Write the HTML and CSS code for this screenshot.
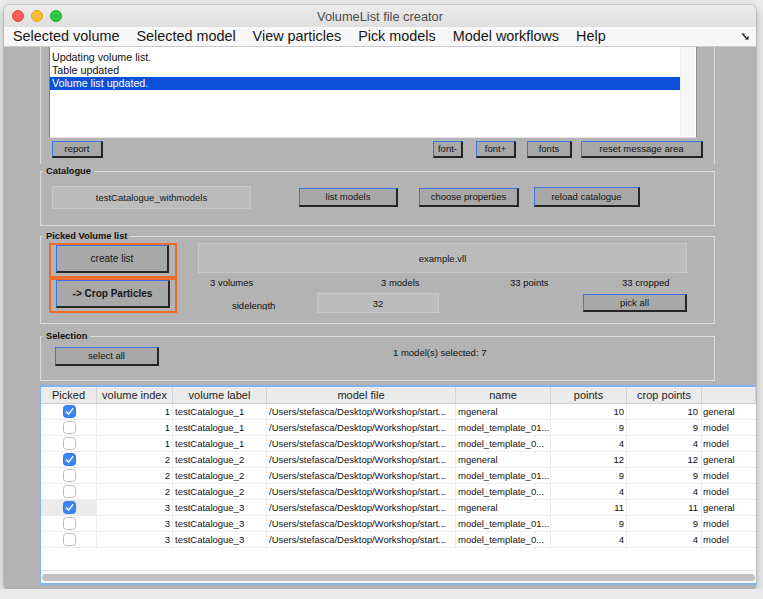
FILE: index.html
```html
<!DOCTYPE html>
<html>
<head>
<meta charset="utf-8">
<title>VolumeList file creator</title>
<link rel="stylesheet" href="styles.css">
</head>
<body>
<div class="window">
  <div class="titlebar">
    <div class="lights">
      <span class="light red"></span><span class="light yellow"></span><span class="light green"></span>
    </div>
    <div class="title">VolumeList file creator</div>
    <div></div>
  </div>
  <div class="menubar">
    <span class="menu">Selected volume</span>
    <span class="menu">Selected model</span>
    <span class="menu">View particles</span>
    <span class="menu">Pick models</span>
    <span class="menu">Model workflows</span>
    <span class="menu">Help</span>
    <svg class="resize" width="8" height="7" viewBox="0 0 8 7"><path d="M0.5 1 H3.5" stroke="#111" stroke-width="1.1"/><path d="M2 1.5 L5.2 4.7" stroke="#111" stroke-width="1.3"/><path d="M7.5 6.5 H3.8 L7.5 2.8 Z" fill="#111"/></svg>
  </div>
  <div class="content">
    <div class="msgframe">
      <div class="listbox">
        <div class="lines">
          <div class="line">Updating volume list.</div>
          <div class="line">Table updated</div>
          <div class="line sel">Volume list updated.</div>
        </div>
        <div class="vscroll"></div>
      </div>
      <div class="msgbuttons">
        <button class="btn b-report">report</button>
        <button class="btn b-fontminus">font-</button>
        <button class="btn b-fontplus">font+</button>
        <button class="btn b-fonts">fonts</button>
        <button class="btn b-reset">reset message area</button>
      </div>
    </div>

    <div class="group g-catalogue">
      <span class="group-title">Catalogue</span>
      <div class="cat-row">
        <div class="entry e-catalogue">testCatalogue_withmodels</div>
        <button class="btn b-list">list models</button>
        <button class="btn b-choose">choose properties</button>
        <button class="btn b-reload">reload catalogue</button>
      </div>
    </div>

    <div class="group g-picked">
      <span class="group-title">Picked Volume list</span>
      <div class="picked-body">
        <div class="picked-left">
          <div class="hl"><button class="btn b-create">create list</button></div>
          <div class="hl"><button class="btn b-crop">-&gt; Crop Particles</button></div>
        </div>
        <div class="picked-right">
          <div class="entry e-file">example.vll</div>
          <div class="stats">
            <span>3 volumes</span>
            <span>3 models</span>
            <span>33 points</span>
            <span>33 cropped</span>
          </div>
          <div class="side-row">
            <span class="side-label">sidelength</span>
            <div class="entry e-side">32</div>
            <button class="btn b-pick">pick all</button>
          </div>
        </div>
      </div>
    </div>

    <div class="group g-selection">
      <span class="group-title">Selection</span>
      <div class="sel-row">
        <button class="btn b-selall">select all</button>
        <span class="sel-text">1 model(s) selected: 7</span>
      </div>
    </div>

    <div class="table">
      <div class="trow thead">
        <div class="th">Picked</div>
        <div class="th">volume index</div>
        <div class="th">volume label</div>
        <div class="th">model file</div>
        <div class="th">name</div>
        <div class="th">points</div>
        <div class="th">crop points</div>
        <div class="th"></div>
      </div>

      <div class="trow">
        <div class="td c-check"><svg class="cb" width="13" height="13" viewBox="0 0 13 13"><rect x="0.5" y="0.5" width="12" height="12" rx="3" fill="#3a86f6" stroke="#2f78e8"/><path d="M3.4 6.9 L5.5 9.1 L9.7 3.9" fill="none" stroke="#fff" stroke-width="1.5" stroke-linecap="round" stroke-linejoin="round"/></svg></div>
        <div class="td num">1</div><div class="td">testCatalogue_1</div><div class="td">/Users/stefasca/Desktop/Workshop/start...</div><div class="td">mgeneral</div><div class="td num">10</div><div class="td num n2">10</div><div class="td last">general</div>
      </div>
      <div class="trow">
        <div class="td c-check"><svg class="cb" width="13" height="13" viewBox="0 0 13 13"><rect x="0.5" y="0.5" width="12" height="12" rx="3" fill="#fff" stroke="#bcbcbc"/></svg></div>
        <div class="td num">1</div><div class="td">testCatalogue_1</div><div class="td">/Users/stefasca/Desktop/Workshop/start...</div><div class="td">model_template_01...</div><div class="td num">9</div><div class="td num n2">9</div><div class="td last">model</div>
      </div>
      <div class="trow">
        <div class="td c-check"><svg class="cb" width="13" height="13" viewBox="0 0 13 13"><rect x="0.5" y="0.5" width="12" height="12" rx="3" fill="#fff" stroke="#bcbcbc"/></svg></div>
        <div class="td num">1</div><div class="td">testCatalogue_1</div><div class="td">/Users/stefasca/Desktop/Workshop/start...</div><div class="td">model_template_0...</div><div class="td num">4</div><div class="td num n2">4</div><div class="td last">model</div>
      </div>
      <div class="trow">
        <div class="td c-check"><svg class="cb" width="13" height="13" viewBox="0 0 13 13"><rect x="0.5" y="0.5" width="12" height="12" rx="3" fill="#3a86f6" stroke="#2f78e8"/><path d="M3.4 6.9 L5.5 9.1 L9.7 3.9" fill="none" stroke="#fff" stroke-width="1.5" stroke-linecap="round" stroke-linejoin="round"/></svg></div>
        <div class="td num">2</div><div class="td">testCatalogue_2</div><div class="td">/Users/stefasca/Desktop/Workshop/start...</div><div class="td">mgeneral</div><div class="td num">12</div><div class="td num n2">12</div><div class="td last">general</div>
      </div>
      <div class="trow">
        <div class="td c-check"><svg class="cb" width="13" height="13" viewBox="0 0 13 13"><rect x="0.5" y="0.5" width="12" height="12" rx="3" fill="#fff" stroke="#bcbcbc"/></svg></div>
        <div class="td num">2</div><div class="td">testCatalogue_2</div><div class="td">/Users/stefasca/Desktop/Workshop/start...</div><div class="td">model_template_01...</div><div class="td num">9</div><div class="td num n2">9</div><div class="td last">model</div>
      </div>
      <div class="trow">
        <div class="td c-check"><svg class="cb" width="13" height="13" viewBox="0 0 13 13"><rect x="0.5" y="0.5" width="12" height="12" rx="3" fill="#fff" stroke="#bcbcbc"/></svg></div>
        <div class="td num">2</div><div class="td">testCatalogue_2</div><div class="td">/Users/stefasca/Desktop/Workshop/start...</div><div class="td">model_template_0...</div><div class="td num">4</div><div class="td num n2">4</div><div class="td last">model</div>
      </div>
      <div class="trow">
        <div class="td c-check hover"><svg class="cb" width="13" height="13" viewBox="0 0 13 13"><rect x="0.5" y="0.5" width="12" height="12" rx="3" fill="#3a86f6" stroke="#2f78e8"/><path d="M3.4 6.9 L5.5 9.1 L9.7 3.9" fill="none" stroke="#fff" stroke-width="1.5" stroke-linecap="round" stroke-linejoin="round"/></svg></div>
        <div class="td num">3</div><div class="td">testCatalogue_3</div><div class="td">/Users/stefasca/Desktop/Workshop/start...</div><div class="td">mgeneral</div><div class="td num">11</div><div class="td num n2">11</div><div class="td last">general</div>
      </div>
      <div class="trow">
        <div class="td c-check"><svg class="cb" width="13" height="13" viewBox="0 0 13 13"><rect x="0.5" y="0.5" width="12" height="12" rx="3" fill="#fff" stroke="#bcbcbc"/></svg></div>
        <div class="td num">3</div><div class="td">testCatalogue_3</div><div class="td">/Users/stefasca/Desktop/Workshop/start...</div><div class="td">model_template_01...</div><div class="td num">9</div><div class="td num n2">9</div><div class="td last">model</div>
      </div>
      <div class="trow">
        <div class="td c-check"><svg class="cb" width="13" height="13" viewBox="0 0 13 13"><rect x="0.5" y="0.5" width="12" height="12" rx="3" fill="#fff" stroke="#bcbcbc"/></svg></div>
        <div class="td num">3</div><div class="td">testCatalogue_3</div><div class="td">/Users/stefasca/Desktop/Workshop/start...</div><div class="td">model_template_0...</div><div class="td num">4</div><div class="td num n2">4</div><div class="td last">model</div>
      </div>

      <div class="filler"></div>
      <div class="hscroll"><div class="thumb"></div></div>
    </div>
  </div>
</div>
</body>
</html>
```

FILE: styles.css
```css
html, body {
  margin: 0;
  padding: 0;
  overflow: hidden;
}
body {
  background: #ebebeb;
  font-family: "Liberation Sans", Arial, sans-serif;
  color: #111;
}

.window {
  margin: 5px 0 0 4px;
  width: 752px;
  height: 584px;
  border-radius: 5px 5px 4px 4px;
  overflow: hidden;
  box-shadow: 0 0 0 0.5px rgba(0,0,0,0.18), 0 3px 10px rgba(0,0,0,0.28);
  display: flex;
  flex-direction: column;
  background: #b3b3b3;
}

/* title bar */
.titlebar {
  height: 22px;
  flex: none;
  display: grid;
  grid-template-columns: 1fr auto 1fr;
  align-items: center;
  background: linear-gradient(#ebebeb, #dfdfdf);
}
.lights {
  display: flex;
  gap: 7px;
  padding-left: 8px;
}
.light {
  width: 12px;
  height: 12px;
  border-radius: 50%;
  box-sizing: border-box;
}
.red { background: #fd5f57; border: 0.5px solid #e1463f; }
.yellow { background: #febc2e; border: 0.5px solid #dfa024; }
.green { background: #2ac840; border: 0.5px solid #1eaa2e; }
.title {
  font-size: 12.8px;
  color: #4c4c4c;
}

/* menu bar */
.menubar {
  height: 19px;
  flex: none;
  display: flex;
  align-items: center;
  gap: 17px;
  padding-left: 9px;
  background: #f7f7f7;
  border-bottom: 1px solid #cbcbcb;
}
.menu {
  font-size: 14.4px;
  color: #161616;
  line-height: 19px;
}
.resize {
  margin-left: auto;
  margin-right: 7px;
}

/* content */
.content {
  flex: 1;
  padding-left: 36px;
  background: #b3b3b3;
  font-size: 9.5px;
}

.msgframe {
  width: 675px;
  height: 117px;
  box-sizing: border-box;
  border-left: 1px solid #dcdcdc;
  border-right: 1px solid #dcdcdc;
  padding-left: 8px;
}
.listbox {
  width: 648px;
  height: 91px;
  box-sizing: border-box;
  display: flex;
  background: #fff;
  border-left: 1px solid #808080;
  border-bottom: 1px solid #e2e2e2;
  border-right: 1px solid #8e8e8e;
}
.lines {
  flex: 1;
  padding-top: 4px;
}
.line {
  height: 13px;
  line-height: 13px;
  padding-left: 2px;
  font-size: 10.7px;
  color: #111;
}
.line.sel {
  background: #0b50d6;
  color: #fff;
}
.vscroll {
  width: 14px;
  background: #f6f6f6;
  border-left: 1px solid #ededed;
  border-right: 1px solid #fff;
}

.msgbuttons {
  display: flex;
  margin-top: 3px;
  padding-left: 3px;
  padding-right: 11px;
  gap: 0;
}

.btn {
  box-sizing: border-box;
  font-family: "Liberation Sans", Arial, sans-serif;
  font-size: 9.5px;
  color: #151515;
  background: #a8a8a8;
  border-style: solid;
  border-width: 1px 2px 2px 1px;
  border-color: #3d74e4 #262626 #262626 #3d74e4;
  padding: 0;
  margin: 0;
  line-height: 1;
}
.b-report { width: 51px; height: 17px; }
.b-fontminus { width: 30px; height: 17px; margin-left: auto; }
.b-fontplus { width: 40px; height: 17px; margin-left: 13px; }
.b-fonts { width: 45px; height: 17px; margin-left: 11px; }
.b-reset { width: 122px; height: 17px; margin-left: 9px; }

/* group boxes */
.group {
  width: 675px;
  box-sizing: border-box;
  border: 1px solid #dcdcdc;
}
.group-title {
  display: block;
  width: max-content;
  height: 12px;
  line-height: 12px;
  margin: -7px 0 -5px 2px;
  padding: 0 3px 0 3px;
  background: #b3b3b3;
  font-weight: bold;
  font-size: 9.3px;
  color: #111;
}

.entry {
  box-sizing: border-box;
  background: #bcbcbc;
  border: 1px solid #c8c8c8;
  display: flex;
  align-items: center;
  justify-content: center;
  font-size: 9.5px;
  color: #151515;
}

.g-catalogue {
  margin-top: 7px;
  height: 55px;
}
.cat-row {
  display: flex;
  align-items: center;
  padding: 14px 0 0 11px;
}
.e-catalogue { width: 199px; height: 23px; }
.b-list { width: 99px; height: 19px; margin-left: 48px; }
.b-choose { width: 100px; height: 19px; margin-left: 21px; }
.b-reload { width: 106px; height: 20px; margin-left: 15px; margin-bottom: 1px; }

.g-picked {
  margin-top: 10px;
  height: 88px;
}
.picked-body {
  display: flex;
  padding: 6px 0 0 8px;
}
.picked-left {
  width: 128px;
}
.hl {
  box-sizing: border-box;
  height: 35px;
  border: 2px solid #f06a2c;
  padding: 0 0 0 5px;
}
.b-create { width: 113px; height: 28px; font-size: 10px; }
.b-crop { width: 114px; height: 28px; font-size: 10px; font-weight: bold; }
.picked-right {
  margin-left: 21px;
  width: 489px;
}
.e-file { width: 489px; height: 30px; }
.stats {
  display: grid;
  grid-template-columns: 171px 129px 112px 1fr;
  padding-left: 12px;
  margin-top: 4px;
  height: 11px;
  line-height: 11px;
}
.side-row {
  display: flex;
  align-items: center;
  margin-top: 5px;
  padding-left: 34px;
}
.side-label {
  width: 85px;
  height: 10px;
  line-height: 12px;
  overflow: hidden;
  margin-top: 3px;
}
.e-side { width: 122px; height: 20px; }
.b-pick { width: 104px; height: 18px; margin-left: auto; }

.g-selection {
  margin-top: 12px;
  height: 45px;
}
.sel-row {
  display: flex;
  align-items: flex-start;
  padding: 10px 0 0 14px;
}
.b-selall { width: 104px; height: 19px; }
.sel-text {
  margin-left: 234px;
  line-height: 11px;
}

/* table */
.table {
  margin-top: 4px;
  width: 716px;
  height: 200px;
  box-sizing: border-box;
  background: #fff;
  border-top: 2px solid #7fb4ef;
  border-left: 1px solid #7fb4ef;
  border-bottom: 2px solid #7fb4ef;
  display: flex;
  flex-direction: column;
}
.trow {
  display: grid;
  grid-template-columns: 56px 76px 94px 189px 95px 76px 75px 54px;
  height: 16px;
  box-sizing: border-box;
  border-bottom: 1px solid #ececec;
  flex: none;
}
.thead {
  height: 17px;
  background: #ebebeb;
  border-bottom: 1px solid #cdcdcd;
}
.th {
  box-sizing: border-box;
  border-right: 1px solid #d3d3d3;
  text-align: center;
  font-size: 11px;
  line-height: 16px;
  color: #222;
  white-space: nowrap;
  overflow: hidden;
}
.td {
  box-sizing: border-box;
  border-right: 1px solid #ececec;
  font-size: 9.5px;
  line-height: 15px;
  padding-left: 2px;
  white-space: nowrap;
  overflow: hidden;
  color: #111;
}
.td.num {
  text-align: right;
  padding-left: 0;
  padding-right: 2px;
}
.td.n2 { padding-right: 3px; }
.td.last { padding-left: 1px; border-right: none; }
.c-check {
  display: flex;
  align-items: center;
  justify-content: center;
  padding: 0 0 0 1px;
}
.c-check.hover { background: #ebebeb; }
.cb { display: block; }

.filler {
  height: 22px;
  flex: none;
}
.hscroll {
  height: 13px;
  flex: none;
  box-sizing: border-box;
  background: #f8f8f8;
  border-top: 1px solid #e2e2e2;
  padding: 3px 0 0 1px;
}
.thumb {
  width: 713px;
  height: 7px;
  border-radius: 4px;
  background: #c2c2c2;
}
```
